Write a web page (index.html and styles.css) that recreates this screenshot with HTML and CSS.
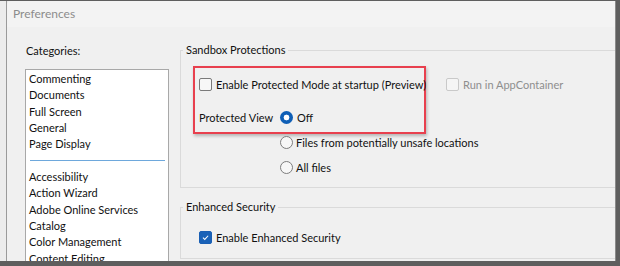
FILE: index.html
```html
<!DOCTYPE html>
<html>
<head>
<meta charset="utf-8">
<link rel="stylesheet" href="styles.css">
</head>
<body>
<div class="screen">
  <div class="window">
    <div class="strip"></div>
    <div class="dialog">
      <div class="titlebar">Preferences</div>
      <div class="body">
        <div class="cats">
          <div class="cats-label">Categories:</div>
          <div class="listbox">
            <div class="item">Commenting</div>
            <div class="item">Documents</div>
            <div class="item">Full Screen</div>
            <div class="item">General</div>
            <div class="item">Page Display</div>
            <div class="sep"></div>
            <div class="item">Accessibility</div>
            <div class="item">Action Wizard</div>
            <div class="item">Adobe Online Services</div>
            <div class="item">Catalog</div>
            <div class="item">Color Management</div>
            <div class="item">Content Editing</div>
          </div>
        </div>
        <div class="panel">
          <div class="group sandbox">
            <div class="legend">Sandbox Protections</div>
            <div class="top-row">
              <div class="redbox">
                <div class="row"><span class="cb"></span><span>Enable Protected Mode at startup (Preview)</span></div>
                <div class="row"><span class="pv-label">Protected View</span><span class="rb on"></span><span>Off</span></div>
              </div>
              <div class="row disabled"><span class="cb dis"></span><span>Run in AppContainer</span></div>
            </div>
            <div class="radios">
              <div class="row"><span class="rb"></span><span>Files from potentially unsafe locations</span></div>
              <div class="row"><span class="rb"></span><span>All files</span></div>
            </div>
          </div>
          <div class="group enhanced">
            <div class="legend">Enhanced Security</div>
            <div class="row enh-row"><span class="cb checked"><svg viewBox="0 0 12 12" width="12" height="12"><path d="M3.2 6.2 L5.2 8.1 L8.9 4.1" fill="none" stroke="#fff" stroke-width="1.1"/></svg></span><span>Enable Enhanced Security</span></div>
          </div>
        </div>
      </div>
    </div>
  </div>
</div>
</body>
</html>
```
FILE: styles.css
```css
html, body {
  margin: 0;
  padding: 0;
}
body {
  width: 620px;
  height: 266px;
  overflow: hidden;
  font-family: "Lato", "Open Sans", sans-serif;
  font-size: 11px;
  color: #111;
}
.screen {
  width: 620px;
  height: 266px;
  box-sizing: border-box;
  padding: 1px 4px 5px 0;
  background: #5e5e5e;
}
.window {
  display: flex;
  height: 100%;
  background: #e9e9e9;
}
.strip {
  width: 6px;
  flex: none;
  border-right: 1px solid #9a9a9a;
  background: #ececec;
}
.dialog {
  flex: 1;
  background: #f0f0f0;
  border-top-left-radius: 4px;
  overflow: hidden;
  border-right: 1px solid #8a8a8a;
}
.titlebar {
  height: 26px;
  box-sizing: border-box;
  padding: 5px 0 0 6px;
  color: #8c8c8c;
  font-size: 12px;
  background: #f3f3f3;
}
.body {
  display: grid;
  grid-template-columns: 144px 1fr;
  column-gap: 11px;
  padding-left: 18px;
  height: 240px;
  overflow: hidden;
}
.cats-label {
  padding: 17px 0 0 1px;
  height: 42px;
  box-sizing: border-box;
  line-height: 14px;
}
.listbox {
  height: 200px;
  background: #fff;
  border: 1px solid #a8a8a8;
  padding: 1px 0 0 3px;
  box-sizing: border-box;
  overflow: hidden;
}
.item {
  height: 16.3px;
  line-height: 16.3px;
  white-space: nowrap;
}
.sep {
  height: 16.7px;
  box-sizing: border-box;
  padding-top: 7.5px;
  margin-left: 1px;
  margin-right: 3px;
}
.sep::before {
  content: "";
  display: block;
  height: 1px;
  background: #6ea8dc;
}
.panel {
  width: 500px;
  padding-top: 23px;
  display: flex;
  flex-direction: column;
  gap: 19px;
}
.group {
  border: 1px solid #dadada;
  padding: 0 0 0 12px;
  box-sizing: border-box;
}
.legend {
  width: fit-content;
  margin: -8px 0 0 -10px;
  padding: 0 3px;
  line-height: 14px;
  background: #f0f0f0;
  white-space: nowrap;
}
.sandbox {
  height: 138px;
}
.enhanced {
  height: 52px;
  padding-left: 18px;
}
.enhanced .legend {
  margin-left: -16px;
}
.enh-row {
  margin-top: 15px;
}
.row {
  display: flex;
  align-items: center;
  gap: 4px;
  height: 16px;
  white-space: nowrap;
}
.top-row {
  display: flex;
  align-items: flex-start;
  gap: 20px;
  margin-top: 9px;
}
.redbox {
  border: 2px solid #e8404e;
  box-shadow: 1px 2px 3px rgba(0,0,0,0.25);
  padding: 8px 10px 7px 4px;
  width: 233px;
  height: 68px;
  box-sizing: border-box;
  display: flex;
  flex-direction: column;
  gap: 17px;
}
.top-row > .row {
  margin-top: 10px;
}
.disabled {
  color: #8e8e8e;
}
.pv-label {
  width: 77px;
}
.radios {
  padding-left: 87px;
  display: flex;
  flex-direction: column;
  gap: 9px;
}
.radios .row {
  gap: 3px;
}
.cb {
  width: 11px;
  height: 11px;
  flex: none;
  border: 1px solid #7a7a7a;
  border-radius: 2px;
  background: #f7f7f7;
  display: flex;
}
.cb.dis {
  border-color: #c9c9c9;
  background: #f5f5f5;
}
.cb.checked {
  border-color: #1a5fb4;
  background: #1a62b8;
}
.cb.checked svg {
  width: 11px;
  height: 11px;
}
.rb {
  width: 11px;
  height: 11px;
  flex: none;
  border: 1px solid #7d7d7d;
  border-radius: 50%;
  background: #f7f7f7;
}
.rb.on {
  border: none;
  width: 13px;
  height: 13px;
  background: radial-gradient(circle, #ffffff 0 2.6px, #0f5fb6 3.2px);
}
```
